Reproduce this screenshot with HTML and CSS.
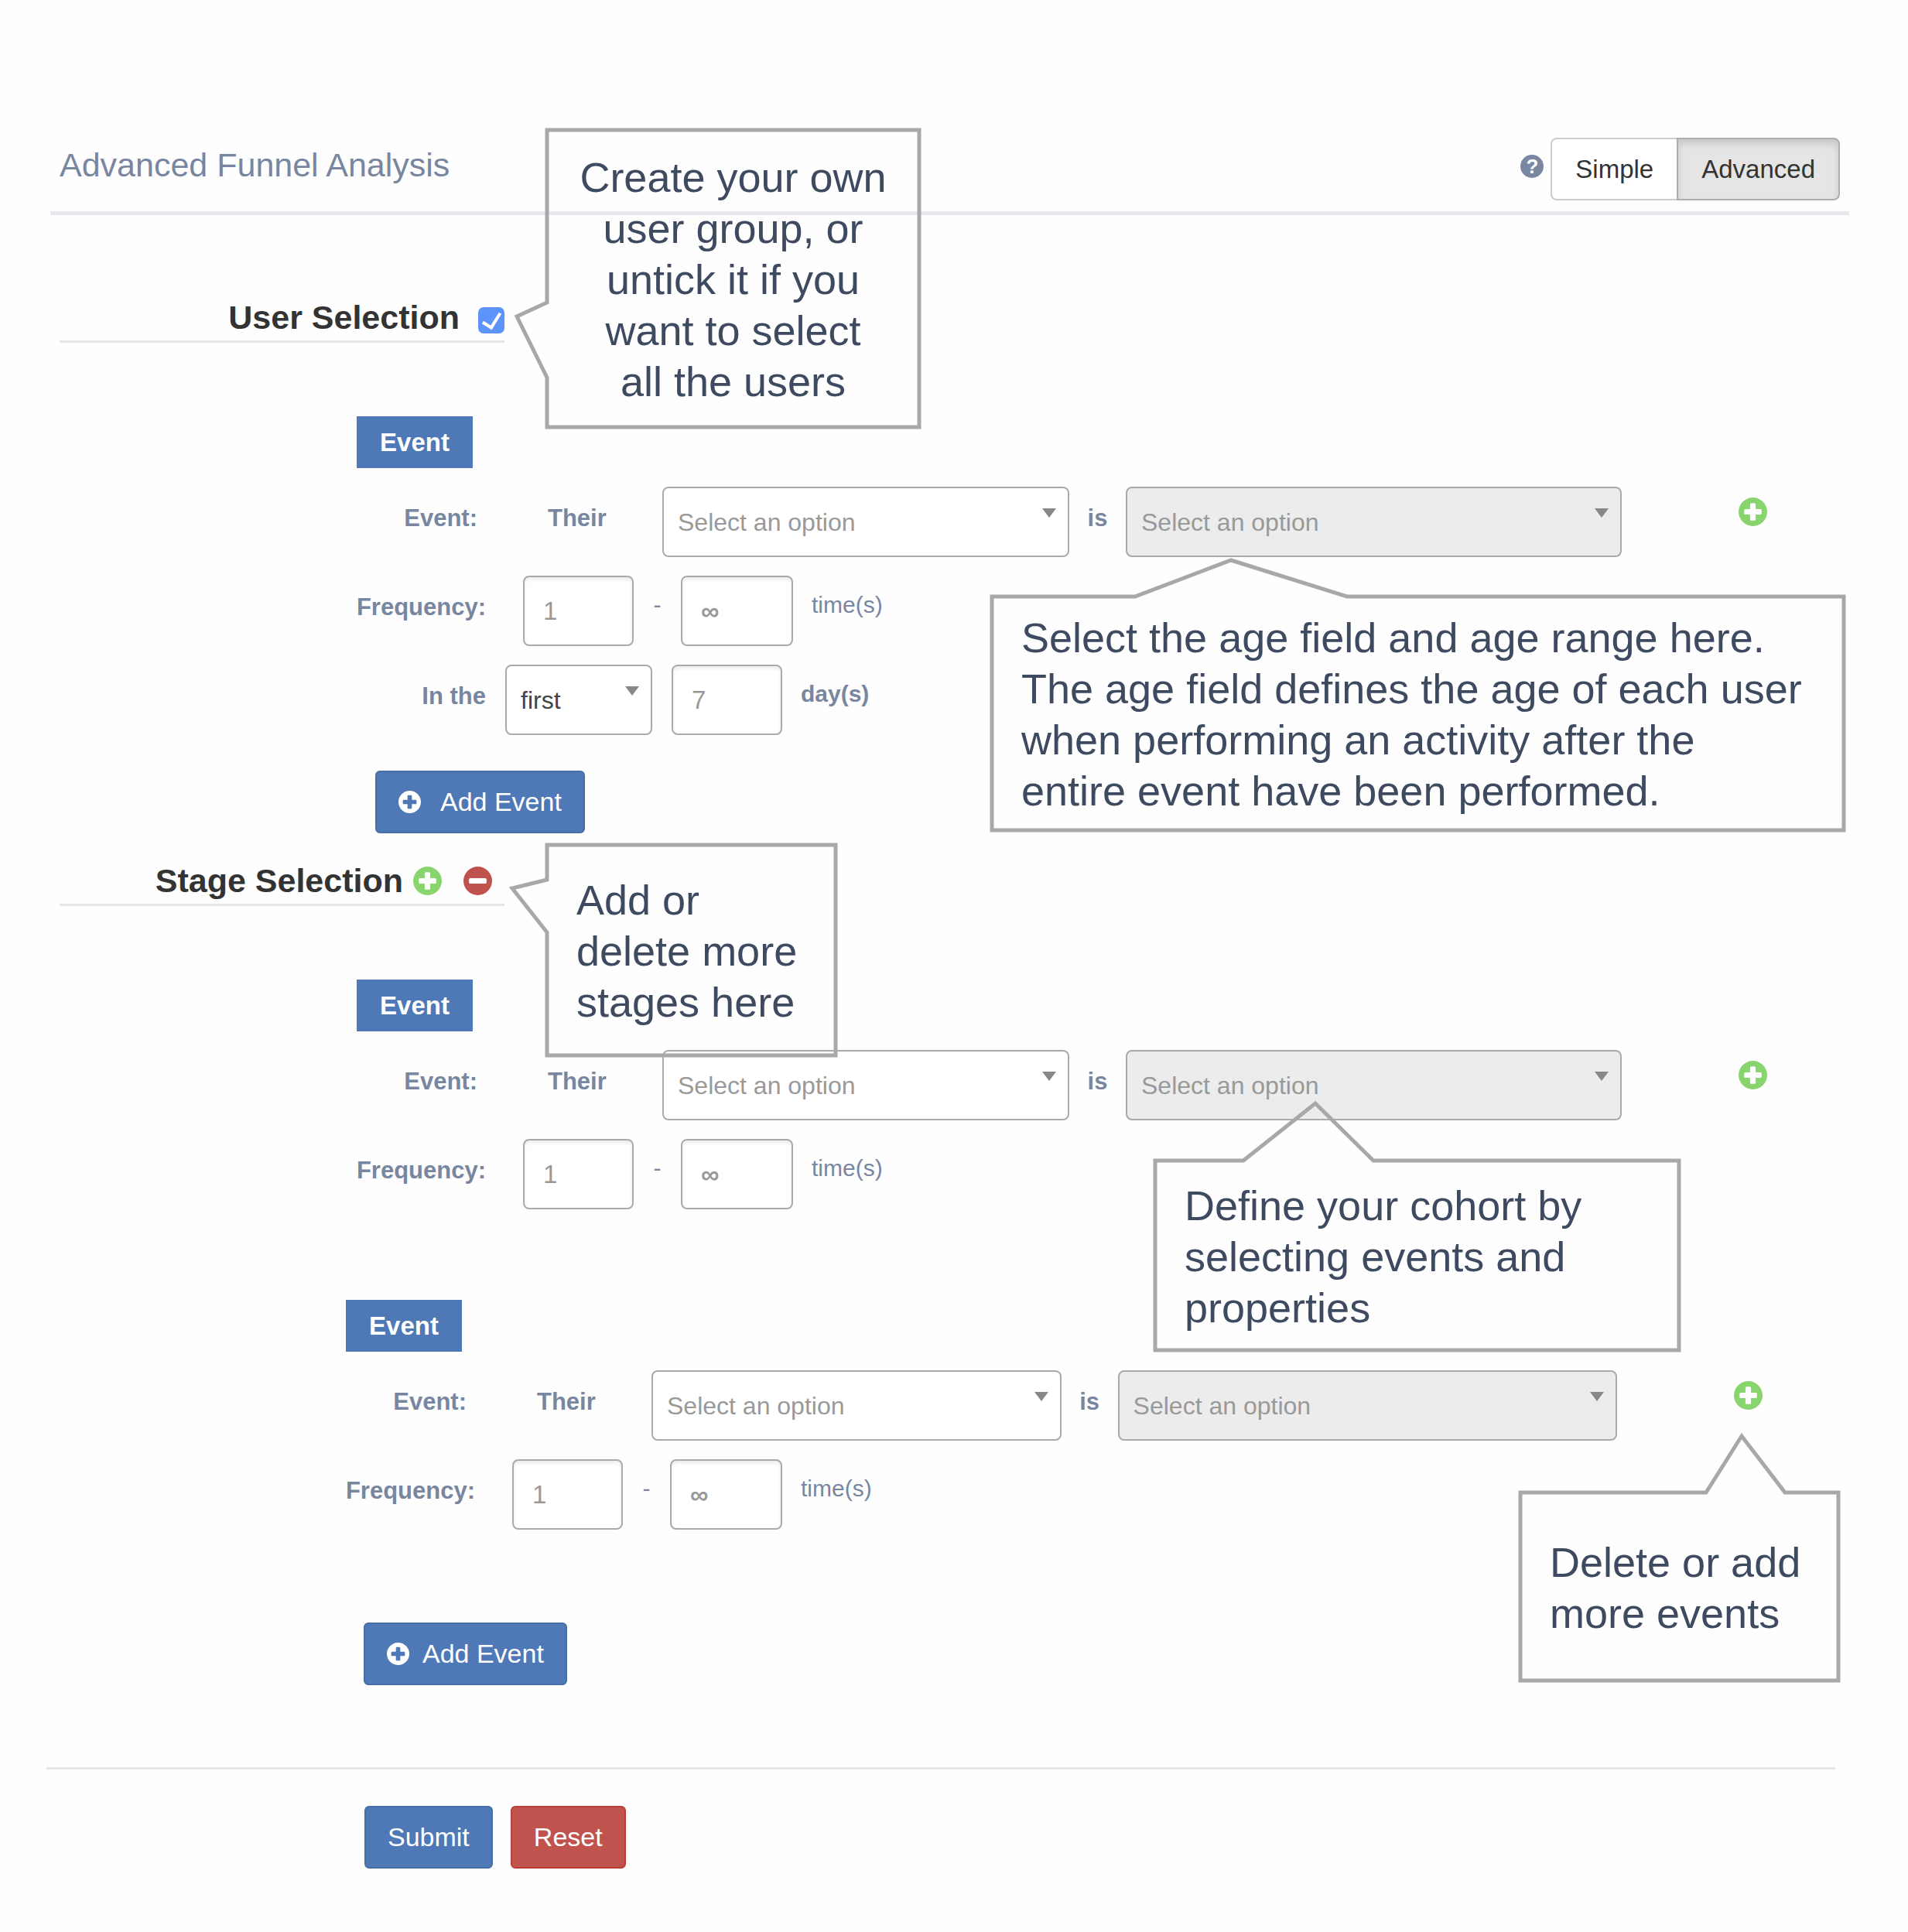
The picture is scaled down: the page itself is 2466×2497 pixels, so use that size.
FILE: index.html
```html
<!DOCTYPE html>
<html lang="en">
<head>
<meta charset="utf-8">
<meta name="viewport" content="width=device-width, initial-scale=1">
<title>Advanced Funnel Analysis</title>
<link rel="stylesheet" href="styles.css">
</head>
<body>
<svg class="sprite" aria-hidden="true">
  <symbol id="plus-circle" viewBox="0 0 36 36">
    <path fill="currentColor" fill-rule="evenodd" d="M18 0a18 18 0 1 1 0 36a18 18 0 1 1 0-36zM16 7q-1.500 0-1.500 1.500V14.500H8.500Q7 14.500 7 16v4q0 1.500 1.500 1.500H14.500V27.500q0 1.500 1.500 1.500h4q1.500 0 1.500-1.500V21.500H27.500q1.500 0 1.500-1.500v-4q0-1.500-1.500-1.500H21.500V8.500Q21.500 7 20 7z"/>
  </symbol>
  <symbol id="minus-circle" viewBox="0 0 36 36">
    <path fill="currentColor" fill-rule="evenodd" d="M18 0a18 18 0 1 1 0 36a18 18 0 1 1 0-36zM8.500 14.500Q7 14.500 7 16v4q0 1.500 1.500 1.500H27.500q1.500 0 1.500-1.500v-4q0-1.500-1.500-1.500z"/>
  </symbol>
</svg>

<main class="page">
  <header class="page-header">
    <h1 class="page-title">Advanced Funnel Analysis</h1>
    <div class="mode">
      <button type="button" class="help" aria-label="Help">?</button>
      <div class="toggle" role="group" aria-label="Mode">
        <button type="button" class="toggle-btn">Simple</button>
        <button type="button" class="toggle-btn is-active" aria-pressed="true">Advanced</button>
      </div>
    </div>
  </header>

  <form class="funnel">
    <section class="section section-user">
      <div class="section-head">
        <h2 class="section-title"><label for="user-selection">User Selection</label></h2>
        <input type="checkbox" class="tick" id="user-selection" checked>
        <div class="callout callout-users">
          <svg class="callout-frame" aria-hidden="true"><polygon points="3,3 484,3 484,387 3,387 3,323 -36,244 3,226"/></svg>
          <p>Create your own<br>user group, or<br>untick it if you<br>want to select<br>all the users</p>
        </div>
      </div>

      <div class="event-group">
        <span class="badge">Event</span>
        <div class="row">
          <span class="label label-event">Event:</span>
          <label class="label label-their" for="prop-1">Their</label>
          <div class="select select-prop">
            <select id="prop-1"><option>Select an option</option></select>
          </div>
          <label class="label label-is" for="value-1">is</label>
          <div class="select select-value">
            <select id="value-1" disabled><option>Select an option</option></select>
            <div class="callout callout-age">
              <svg class="callout-frame" aria-hidden="true"><polygon points="3,3 188,3 312,-44 462,3 1104,3 1104,305 3,305"/></svg>
              <p>Select the age field and age range here.<br>The age field defines the age of each user<br>when performing an activity after the<br>entire event have been performed.</p>
            </div>
          </div>
          <div class="row-action">
            <button type="button" class="icon-btn add" aria-label="Add event"><svg><use href="#plus-circle"/></svg></button>
          </div>
        </div>
        <div class="row">
          <label class="label label-field" for="min-1">Frequency:</label>
          <input class="number number-first" id="min-1" type="text" placeholder="1">
          <span class="dash">-</span>
          <input class="number number-max" id="max-1" type="text" placeholder="∞" aria-label="Maximum frequency">
          <span class="unit">time(s)</span>
        </div>
        <div class="row">
          <label class="label label-field" for="period">In the</label>
          <div class="select select-period">
            <select id="period"><option>first</option><option>last</option></select>
          </div>
          <input class="number" id="days" type="text" placeholder="7" aria-label="Days">
          <label class="unit unit-strong" for="days">day(s)</label>
        </div>
      </div>
      <button type="button" class="btn btn-primary btn-add"><svg><use href="#plus-circle"/></svg>Add Event</button>
    </section>

    <section class="section section-stage">
      <div class="section-head section-head-stage">
        <h2 class="section-title">Stage Selection</h2>
        <div class="stage-actions">
          <button type="button" class="icon-btn add" aria-label="Add stage"><svg><use href="#plus-circle"/></svg></button>
          <button type="button" class="icon-btn remove" aria-label="Remove stage"><svg><use href="#minus-circle"/></svg></button>
        </div>
        <div class="callout callout-stages">
          <svg class="callout-frame" aria-hidden="true"><polygon points="3,3 376,3 376,275 3,275 3,116 -42,59 3,48"/></svg>
          <p>Add or<br>delete more<br>stages here</p>
        </div>
      </div>

      <div class="event-group">
        <span class="badge">Event</span>
        <div class="row">
          <span class="label label-event">Event:</span>
          <label class="label label-their" for="prop-2">Their</label>
          <div class="select select-prop">
            <select id="prop-2"><option>Select an option</option></select>
          </div>
          <label class="label label-is" for="value-2">is</label>
          <div class="select select-value">
            <select id="value-2" disabled><option>Select an option</option></select>
            <div class="callout callout-cohort">
              <svg class="callout-frame" aria-hidden="true"><polygon points="3,3 117,3 210,-71 285,3 680,3 680,248 3,248"/></svg>
              <p>Define your cohort by<br>selecting events and<br>properties</p>
            </div>
          </div>
          <div class="row-action">
            <button type="button" class="icon-btn add" aria-label="Add event"><svg><use href="#plus-circle"/></svg></button>
          </div>
        </div>
        <div class="row">
          <label class="label label-field" for="min-2">Frequency:</label>
          <input class="number number-first" id="min-2" type="text" placeholder="1">
          <span class="dash">-</span>
          <input class="number number-max" id="max-2" type="text" placeholder="∞" aria-label="Maximum frequency">
          <span class="unit">time(s)</span>
        </div>
      </div>

      <div class="event-group event-group-nested">
        <span class="badge">Event</span>
        <div class="row">
          <span class="label label-event">Event:</span>
          <label class="label label-their" for="prop-3">Their</label>
          <div class="select select-prop">
            <select id="prop-3"><option>Select an option</option></select>
          </div>
          <label class="label label-is" for="value-3">is</label>
          <div class="select select-value">
            <select id="value-3" disabled><option>Select an option</option></select>
          </div>
          <div class="row-action">
            <button type="button" class="icon-btn add" aria-label="Add event"><svg><use href="#plus-circle"/></svg></button>
            <div class="callout callout-events">
              <svg class="callout-frame" aria-hidden="true"><polygon points="3,3 243,3 289,-70 345,3 414,3 414,246 3,246"/></svg>
              <p>Delete or add<br>more events</p>
            </div>
          </div>
        </div>
        <div class="row">
          <label class="label label-field" for="min-3">Frequency:</label>
          <input class="number number-first" id="min-3" type="text" placeholder="1">
          <span class="dash">-</span>
          <input class="number number-max" id="max-3" type="text" placeholder="∞" aria-label="Maximum frequency">
          <span class="unit">time(s)</span>
        </div>
      </div>
      <button type="button" class="btn btn-primary btn-add btn-add-nested"><svg><use href="#plus-circle"/></svg>Add Event</button>
    </section>

    <footer class="form-footer">
      <button type="submit" class="btn btn-primary">Submit</button>
      <button type="reset" class="btn btn-danger">Reset</button>
    </footer>
  </form>
</main>
</body>
</html>
```
FILE: styles.css
```css
* {
  box-sizing: border-box;
}

body {
  margin: 0;
  background: #fefefe;
  color: #7886a0;
  font-family: "Liberation Sans", Arial, sans-serif;
  font-size: 30px;
}

button,
input,
select {
  margin: 0;
  font-family: inherit;
}

.sprite {
  display: none;
}

.page {
  padding: 178px 76px 76px 65px;
}

/* Header */

.page-header {
  display: flex;
  justify-content: space-between;
  align-items: flex-start;
  padding: 0 12px 14px;
  border-bottom: 5px solid #e6e8ee;
}

.page-title {
  margin: 0;
  font-size: 43px;
  font-weight: 400;
  line-height: 70px;
}

.mode {
  display: flex;
  align-items: flex-start;
  gap: 9px;
}

.help {
  width: 30px;
  height: 30px;
  margin-top: 22px;
  padding: 0;
  border: 0;
  border-radius: 50%;
  background: #7a87a0;
  color: #fefefe;
  font-size: 26px;
  font-weight: 700;
  line-height: 30px;
}

.toggle {
  display: flex;
}

.toggle-btn {
  padding: 20px 30px;
  border: 2px solid #ccc;
  border-right: 0;
  border-radius: 8px 0 0 8px;
  background: #fff;
  color: #333;
  font-size: 33px;
  line-height: 37px;
}

.toggle-btn.is-active {
  border: 2px solid #adadad;
  border-radius: 0 8px 8px 0;
  background: #e5e5e5;
  box-shadow: inset 0 6px 10px rgba(0, 0, 0, 0.13);
}

/* Sections */

.funnel {
  padding: 0 12px;
}

.section-user {
  padding-top: 105px;
}

.section-stage {
  padding-top: 34px;
}

.section-head {
  position: relative;
  display: flex;
  justify-content: flex-end;
  align-items: center;
  gap: 24px;
  width: 575px;
  height: 60px;
  margin-bottom: 95px;
  padding-bottom: 3px;
  border-bottom: 3px solid #e5e5e5;
}

.section-head-stage {
  gap: 13px;
  padding-right: 16px;
}

.section-title {
  margin: 0;
  color: #333;
  font-size: 43px;
  line-height: 54px;
}

.tick {
  appearance: none;
  display: grid;
  place-items: center;
  width: 34px;
  height: 34px;
  margin-top: 8px;
  border-radius: 7px;
  background: #5c94fc;
}

.tick:checked::after {
  content: "";
  width: 11px;
  height: 20px;
  margin-bottom: 5px;
  border: solid #fff;
  border-width: 0 4px 4px 0;
  transform: rotate(32deg);
}

.stage-actions {
  display: flex;
  gap: 28px;
}

.icon-btn {
  display: block;
  width: 37px;
  height: 37px;
  padding: 0;
  border: 0;
  background: none;
}

.icon-btn svg {
  display: block;
  width: 37px;
  height: 37px;
}

.add {
  color: #87d56c;
}

.remove {
  color: #c0524d;
}

/* Event groups */

.event-group {
  display: flex;
  flex-direction: column;
  gap: 24px;
  padding-right: 94px;
}

.event-group-nested {
  margin: 117px 6px 0 -14px;
}

.badge {
  width: 150px;
  margin-left: 384px;
  background: #4f78b6;
  color: #fff;
  font-size: 33px;
  font-weight: 700;
  line-height: 67px;
  text-align: center;
}

.row {
  display: flex;
  align-items: flex-start;
  height: 91px;
}

.label {
  flex: none;
  font-size: 31px;
  font-weight: 700;
  line-height: 82px;
}

.label-event {
  width: 540px;
  text-align: right;
}

.label-their {
  width: 239px;
  padding-left: 91px;
}

.label-is {
  width: 73px;
  text-align: center;
}

.label-field {
  width: 551px;
  text-align: right;
}

.select {
  position: relative;
  height: 91px;
}

.select::after {
  content: "";
  position: absolute;
  top: 28px;
  right: 17px;
  border: solid transparent;
  border-width: 12px 9px 0;
  border-top-color: #888;
  pointer-events: none;
}

.select select {
  appearance: none;
  width: 100%;
  height: 100%;
  padding: 0 40px 0 18px;
  border: 2px solid #aaa;
  border-radius: 8px;
  background: #fff;
  color: #999;
  font-size: 32px;
}

.select select:disabled {
  background: #ececec;
  opacity: 1;
}

.select-prop {
  flex: 526 1 0;
}

.select-value {
  flex: 641 1 0;
}

.select-period {
  width: 190px;
  margin: 0 25px;
}

.select-period select {
  color: #444;
}

.row-action {
  position: relative;
  margin: 14px 0 0 151px;
}

.number {
  width: 143px;
  height: 91px;
  padding: 0 24px;
  border: 2px solid #aaa;
  border-radius: 8px;
  background: #fff;
  box-shadow: inset 0 3px 4px rgba(0, 0, 0, 0.08);
  color: #555;
  font-size: 33px;
}

.number::placeholder {
  color: #999;
  opacity: 1;
}

.number-first {
  margin-left: 48px;
}

.number-max {
  width: 145px;
}

.number-max::placeholder {
  font-weight: 700;
}

.dash {
  width: 61px;
  line-height: 76px;
  text-align: center;
}

.unit {
  margin-left: 24px;
  line-height: 76px;
}

.unit-strong {
  font-weight: 700;
}

/* Buttons */

.btn {
  display: flex;
  align-items: center;
  padding: 19px 28px;
  border: 2px solid #476ca6;
  border-radius: 6px;
  color: #fff;
  font-size: 34px;
  line-height: 39px;
}

.btn svg {
  width: 29px;
  height: 29px;
}

.btn-primary {
  background: #4f78b6;
}

.btn-danger {
  border-color: #bb3f39;
  background: #c0534e;
}

.btn-add {
  gap: 25px;
  margin: 46px 0 0 408px;
}

.btn-add-nested {
  gap: 17px;
  margin: 120px 0 0 393px;
}

.form-footer {
  display: flex;
  gap: 23px;
  margin: 106px 6px 0 -17px;
  padding: 47px 0 0 411px;
  border-top: 3px solid #e6e6e6;
}

/* Callouts laid over the form */

.callout {
  position: absolute;
  z-index: 1;
  display: flex;
  align-items: center;
  padding: 2px 41px 0;
  color: #3e4a60;
  font-size: 54px;
  line-height: 66px;
  white-space: nowrap;
  pointer-events: none;
}

.callout p {
  margin: 0;
}

.callout-frame {
  position: absolute;
  inset: 0;
  width: 100%;
  height: 100%;
  overflow: visible;
  fill: none;
  stroke: #a9a8a8;
  stroke-width: 5;
}

.callout-users {
  top: -218px;
  left: calc(100% + 52px);
  justify-content: center;
  width: 487px;
  height: 390px;
  text-align: center;
}

.callout-age {
  top: 139px;
  left: -176px;
  width: 1107px;
  height: 308px;
}

.callout-stages {
  top: -22px;
  left: calc(100% + 52px);
  width: 379px;
  height: 278px;
}

.callout-cohort {
  top: 140px;
  left: 35px;
  width: 683px;
  height: 251px;
}

.callout-events {
  top: 141px;
  right: -101px;
  width: 417px;
  height: 249px;
}
```
